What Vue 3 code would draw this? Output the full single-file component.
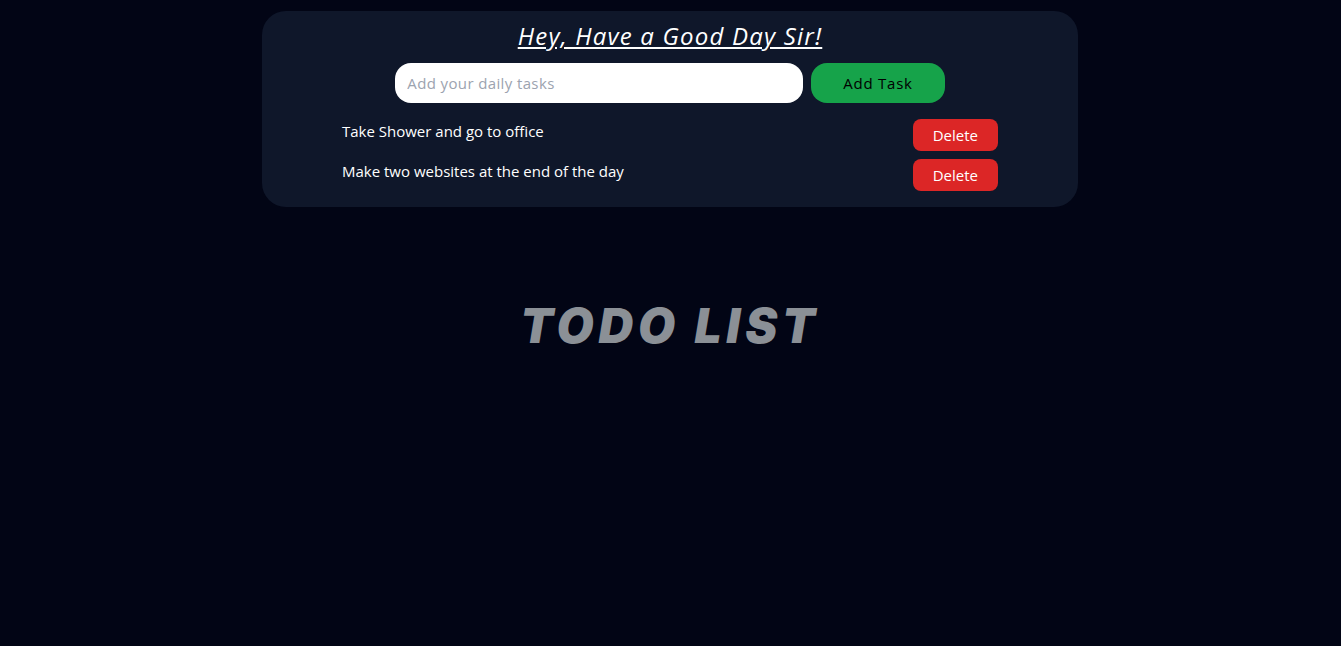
<script setup>
import { ref } from 'vue'

const draft = ref('')
const tasks = ref([
  { id: 1, text: 'Take Shower and go to office' },
  { id: 2, text: 'Make two websites at the end of the day' },
])
let nextId = 3

function addTask() {
  const text = draft.value.trim()
  if (!text) return
  tasks.value.push({ id: nextId++, text })
  draft.value = ''
}

function removeTask(id) {
  tasks.value = tasks.value.filter((task) => task.id !== id)
}
</script>

<template>
  <main class="page">
    <section class="card">
      <h1 class="greeting">Hey, Have a Good Day Sir!</h1>
      <form class="entry" @submit.prevent="addTask">
        <input v-model="draft" class="field" type="text" placeholder="Add your daily tasks" aria-label="Add your daily tasks" />
        <button class="add" type="submit">Add Task</button>
      </form>
      <ul class="tasks">
        <li v-for="task in tasks" :key="task.id" class="task">
          <span>{{ task.text }}</span>
          <button class="delete" type="button" @click="removeTask(task.id)">Delete</button>
        </li>
      </ul>
    </section>
    <h2 class="title">TODO LIST</h2>
  </main>
</template>

<style>
body {
  background: #020515;
}
</style>

<style scoped>
.page {
  box-sizing: border-box;
  min-height: 100vh;
  padding: 11px 17px 16px 16px;
  background: #020515;
  color: #fff;
  font-family: "Segoe UI", "Open Sans", "Noto Sans", sans-serif;
  font-size: 15px;
  line-height: 24px;
}

.card {
  box-sizing: border-box;
  max-width: 816px;
  margin: 0 auto;
  padding: 8px 80px 16px;
  border-radius: 24px;
  background: #0f172a;
}

.greeting {
  margin: 0;
  font-size: 24px;
  font-style: italic;
  font-weight: 400;
  line-height: 34px;
  letter-spacing: 0.05em;
  text-align: center;
  text-decoration: underline;
}

.entry {
  display: flex;
  justify-content: center;
  gap: 8px;
  margin-top: 10px;
}

.field,
.add {
  box-sizing: border-box;
  height: 40px;
  border: 0;
  border-radius: 16px;
  font: inherit;
}

.field {
  flex: 0 1 408px;
  min-width: 0;
  padding: 8px 12px;
  background: #fff;
  color: #111;
  letter-spacing: 0.025em;
}

.field::placeholder {
  color: #9ca3af;
  opacity: 1;
}

.add {
  padding: 8px 32px;
  background: #16a34a;
  color: #000;
  letter-spacing: 0.05em;
  white-space: nowrap;
}

.tasks {
  display: grid;
  gap: 8px;
  margin: 16px 0 0;
  padding: 0;
  list-style: none;
}

.task {
  display: flex;
  justify-content: space-between;
  align-items: flex-start;
  gap: 16px;
}

.delete {
  padding: 4px 20px;
  border: 0;
  border-radius: 8px;
  background: #dc2626;
  color: #fff;
  font: inherit;
}

.title {
  margin: 95px 0 0;
  color: #8b9096;
  font-family: Inter, "Open Sans", sans-serif;
  font-size: 48px;
  font-style: italic;
  font-weight: 900;
  line-height: 48px;
  letter-spacing: 0.1em;
  text-align: center;
}
</style>
